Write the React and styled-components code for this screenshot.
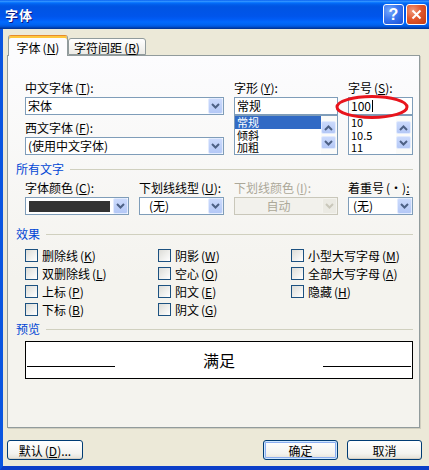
import styled, { createGlobalStyle } from "styled-components";

const GlobalStyle = createGlobalStyle`
  html, body {
    margin: 0;
    padding: 0;
    background: #fff;
  }
  body {
    font-family: "Noto Sans CJK SC", "Liberation Sans", sans-serif;
    font-size: 12px;
    color: #000;
  }
`;

const Window = styled.div`
  width: 429px;
  height: 470px;
  display: flex;
  flex-direction: column;
  overflow: hidden;
`;
const TitleBar = styled.div`
  height: 29px;
  flex-shrink: 0;
  box-sizing: border-box;
  display: flex;
  align-items: center;
  justify-content: space-between;
  padding: 0 2px 0 5px;
  background: linear-gradient(
    to bottom,
    #0058ee 0%,
    #3593ff 4%,
    #288eff 6%,
    #127dff 8%,
    #036ffc 10%,
    #0262ee 14%,
    #0057e5 20%,
    #0054e3 24%,
    #0055eb 56%,
    #005bf5 66%,
    #026afe 76%,
    #0062ef 86%,
    #0052d6 92%,
    #0040ab 96%,
    #003092 100%
  );
`;
const TitleText = styled.span`
  color: #fff;
  font-weight: bold;
  font-size: 13px;
  letter-spacing: 1px;
  text-shadow: 1px 1px 0 #0a1883;
`;
const CaptionButtons = styled.div`
  display: flex;
  gap: 2px;
`;
const CaptionButton = styled.div`
  width: 21px;
  height: 21px;
  box-sizing: border-box;
  border: 1px solid #fff;
  border-radius: 3px;
  display: flex;
  align-items: center;
  justify-content: center;
  color: #fff;
  font-family: "Liberation Sans", sans-serif;
  font-weight: bold;
  font-size: 16px;
  background: ${(props) =>
    props.$variant === "close"
      ? "radial-gradient(circle at 30% 30%, #f09a7c 0%, #e2572d 45%, #c13b12 100%)"
      : "radial-gradient(circle at 30% 30%, #78a8fb 0%, #3b77f0 45%, #1a4fd6 100%)"};
`;

const Frame = styled.div`
  flex: 1;
  display: flex;
  flex-direction: column;
  background: #ece9d8;
  border-left: 3px solid #0a55e0;
  border-bottom: 4px solid #0c3ec8;
  padding: 6px 7px 0 4px;
`;
const Tabs = styled.div`
  height: 20px;
  display: flex;
  align-items: flex-end;
  padding-left: 1px;
  position: relative;
  z-index: 1;
`;
const Tab = styled.div`
  box-sizing: border-box;
  width: ${(props) => props.$w}px;
  height: ${(props) => (props.$active ? 21 : 17)}px;
  margin-bottom: ${(props) => (props.$active ? -1 : 0)}px;
  border: 1px solid #919b9c;
  border-bottom: ${(props) => (props.$active ? "none" : "1px solid #919b9c")};
  border-top-color: ${(props) => (props.$active ? "#e68b2c" : "#919b9c")};
  border-radius: 3px 3px 0 0;
  box-shadow: ${(props) => (props.$active ? "inset 0 2px 0 #ffc73c" : "none")};
  background: ${(props) => (props.$active ? "#fcfcfe" : "linear-gradient(#ffffff, #ecebe6)")};
  display: flex;
  align-items: center;
  justify-content: center;
  padding-top: 2px;
  white-space: nowrap;
`;
const Panel = styled.div`
  width: 413px;
  height: 373px;
  box-sizing: border-box;
  border: 1px solid #919b9c;
  box-shadow: 1px 1px 0 #d0cebf;
  background: linear-gradient(#fcfcfe, #f4f3ee 60%);
  padding: 25px 6px 0 17px;
  display: flex;
  flex-direction: column;
`;

const FieldGrid = styled.div`
  display: grid;
  grid-template-columns: 104px 85px 104px 65px;
  column-gap: 10px;
  margin-top: ${(props) => props.$mt || 0}px;
`;
const Column = styled.div`
  display: flex;
  flex-direction: column;
  gap: ${(props) => props.$gap || 0}px;
  grid-column: ${(props) => props.$span || "auto"};
`;
const Field = styled.div`
  display: flex;
  flex-direction: column;
  gap: 2px;
`;
const Label = styled.div`
  height: 14px;
  line-height: 14px;
  white-space: nowrap;
  color: ${(props) => (props.$disabled ? "#aca899" : "#000")};
`;
const Combo = styled.div`
  height: 18px;
  box-sizing: border-box;
  border: 1px solid ${(props) => (props.$disabled ? "#c9c7ba" : "#7f9db9")};
  background: ${(props) => (props.$disabled ? "#f2f1ec" : "#fff")};
  color: ${(props) => (props.$disabled ? "#aca899" : "#000")};
  display: flex;
  align-items: center;
`;
const ComboText = styled.div`
  flex: 1;
  line-height: 16px;
  padding-left: ${(props) => props.$indent ?? 2}px;
  text-align: ${(props) => (props.$center ? "center" : "left")};
  white-space: nowrap;
`;
const ColorSwatch = styled.div`
  flex: 1;
  height: 11px;
  margin: 0 3px 0 3px;
  background: #333333;
`;
const DropButton = styled.div`
  width: 15px;
  height: 16px;
  box-sizing: border-box;
  border: 1px solid ${(props) => (props.$disabled ? "#f4f3ee" : "#e2ebfe")};
  border-radius: 2px;
  background: ${(props) =>
    props.$disabled ? "#ebeae3" : "linear-gradient(#cbdafc, #b4c8f6)"};
  display: flex;
  align-items: center;
  justify-content: center;
`;
const TextBox = styled.div`
  position: relative;
  height: 18px;
  box-sizing: border-box;
  border: 1px solid #7f9db9;
  background: #fff;
  line-height: 16px;
  padding-left: 2px;
  display: flex;
  align-items: center;
`;
const Caret = styled.span`
  width: 1px;
  height: 12px;
  background: #000;
  margin-left: 1px;
`;
const Ellipse = styled.svg`
  position: absolute;
  left: -16px;
  top: -5px;
  overflow: visible;
  z-index: 2;
`;
const ListBox = styled.div`
  height: 40px;
  box-sizing: border-box;
  border: 1px solid #7f9db9;
  background: #fff;
  display: flex;
`;
const ListItems = styled.div`
  flex: 1;
`;
const ListItem = styled.div`
  height: 12.6px;
  line-height: 12.6px;
  font-size: 11px;
  padding-left: 2px;
  background: ${(props) => (props.$selected ? "#316ac5" : "transparent")};
  color: ${(props) => (props.$selected ? "#fff" : "#000")};
  white-space: nowrap;
`;
const ScrollColumn = styled.div`
  width: 16px;
  display: flex;
  flex-direction: column;
  justify-content: center;
  align-items: flex-start;
  gap: 2px;
  background: #fbfbf9;
`;
const ScrollButton = styled.div`
  width: 15px;
  height: 13px;
  box-sizing: border-box;
  border: 1px solid #e2ebfe;
  border-radius: 2px;
  background: linear-gradient(#cbdafc, #b4c8f6);
  display: flex;
  align-items: center;
  justify-content: center;
`;

const SectionHead = styled.div`
  height: 14px;
  margin: ${(props) => props.$mt}px 0 0 -9px;
  display: flex;
  align-items: center;
  gap: 6px;
  color: #0046d5;
  line-height: 14px;
  &::after {
    content: "";
    flex: 1;
    height: 1px;
    background: #d0d0bf;
  }
`;

const Effects = styled.div`
  margin-top: 5px;
  display: grid;
  grid-template-columns: 133px 133px 1fr;
  grid-template-rows: repeat(4, 18px);
  grid-auto-flow: column;
`;
const CheckRow = styled.div`
  display: flex;
  align-items: center;
  gap: 4px;
  white-space: nowrap;
`;
const CheckBox = styled.span`
  width: 13px;
  height: 13px;
  box-sizing: border-box;
  border: 1px solid #1c5180;
  background: linear-gradient(135deg, #dcdcd7, #ffffff);
`;

const Preview = styled.div`
  margin-top: 5px;
  height: 38px;
  box-sizing: border-box;
  border: 1px solid #000;
  background: #fff;
  display: grid;
  grid-template-columns: 88px 1fr 88px;
  align-items: center;
  padding: 0 1px;
`;
const PreviewLine = styled.div`
  height: 1px;
  background: #000;
  margin-top: 13px;
`;
const PreviewText = styled.div`
  text-align: center;
  font-size: 16px;
  line-height: 18px;
`;

const Footer = styled.div`
  margin-top: 12px;
  display: flex;
  justify-content: space-between;
`;
const ButtonGroup = styled.div`
  display: flex;
  gap: 9px;
`;
const Button = styled.div`
  width: ${(props) => props.$w}px;
  height: 20px;
  box-sizing: border-box;
  border: 1px solid #003c74;
  border-radius: 3px;
  background: linear-gradient(#ffffff, #f3f3ef 70%, #e3e0d6);
  box-shadow: ${(props) =>
    props.$default ? "inset 0 0 0 1px #cee7ff, inset 0 0 0 2px #8caef0" : "inset 0 -1px 0 #d6d0c5"};
  display: flex;
  align-items: center;
  justify-content: center;
  white-space: nowrap;
`;
const Mnemonic = styled.span`
  margin-left: 2px;
`;

const Chevron = ({ up, disabled }) => (
  <svg width="9" height="6" viewBox="0 0 9 6">
    <path
      d={up ? "M1 5 L4.5 1.5 L8 5" : "M1 1 L4.5 4.5 L8 1"}
      stroke={disabled ? "#c9c7ba" : "#4d6185"}
      strokeWidth="2"
      fill="none"
    />
  </svg>
);

const Mn = ({ t, k, tail = "" }) => (
  <>
    {t}
    <Mnemonic>
      (<u>{k}</u>){tail}
    </Mnemonic>
  </>
);

const Select = ({ children, disabled, indent, center }) => (
  <Combo $disabled={disabled}>
    <ComboText $indent={indent} $center={center}>
      {children}
    </ComboText>
    <DropButton $disabled={disabled}>
      <Chevron disabled={disabled} />
    </DropButton>
  </Combo>
);

const List = ({ items, selected }) => (
  <ListBox>
    <ListItems>
      {items.map((item) => (
        <ListItem key={item} $selected={item === selected}>
          {item}
        </ListItem>
      ))}
    </ListItems>
    <ScrollColumn>
      <ScrollButton>
        <Chevron up />
      </ScrollButton>
      <ScrollButton>
        <Chevron />
      </ScrollButton>
    </ScrollColumn>
  </ListBox>
);

const effects = [
  ["删除线", "K"],
  ["双删除线", "L"],
  ["上标", "P"],
  ["下标", "B"],
  ["阴影", "W"],
  ["空心", "O"],
  ["阳文", "E"],
  ["阴文", "G"],
  ["小型大写字母", "M"],
  ["全部大写字母", "A"],
  ["隐藏", "H"],
];

const App = () => {
  return (
    <>
      <GlobalStyle />
      <Window>
        <TitleBar>
          <TitleText>字体</TitleText>
          <CaptionButtons>
            <CaptionButton>?</CaptionButton>
            <CaptionButton $variant="close">
              <svg width="11" height="11" viewBox="0 0 11 11">
                <path d="M1.5 1.5 L9.5 9.5 M9.5 1.5 L1.5 9.5" stroke="#fff" strokeWidth="2" />
              </svg>
            </CaptionButton>
          </CaptionButtons>
        </TitleBar>
        <Frame>
          <Tabs>
            <Tab $active $w={60}>
              <Mn t="字体" k="N" />
            </Tab>
            <Tab $w={78}>
              <Mn t="字符间距" k="R" />
            </Tab>
          </Tabs>
          <Panel>
            <FieldGrid>
              <Column $span="1 / 3" $gap={6}>
                <Field>
                  <Label>
                    <Mn t="中文字体" k="T" tail=":" />
                  </Label>
                  <Select>宋体</Select>
                </Field>
                <Field>
                  <Label>
                    <Mn t="西文字体" k="F" tail=":" />
                  </Label>
                  <Select>(使用中文字体)</Select>
                </Field>
              </Column>
              <Column>
                <Field>
                  <Label>
                    <Mn t="字形" k="Y" tail=":" />
                  </Label>
                  <Column>
                    <TextBox>常规</TextBox>
                    <List items={["常规", "倾斜", "加粗"]} selected="常规" />
                  </Column>
                </Field>
              </Column>
              <Column>
                <Field>
                  <Label>
                    <Mn t="字号" k="S" tail=":" />
                  </Label>
                  <Column>
                    <TextBox>
                      100
                      <Caret />
                      <Ellipse width="76" height="26" viewBox="0 0 76 26">
                        <ellipse cx="39" cy="14" rx="35" ry="10.5" stroke="#e8141c" strokeWidth="3" fill="none" />
                      </Ellipse>
                    </TextBox>
                    <List items={["10", "10.5", "11"]} />
                  </Column>
                </Field>
              </Column>
            </FieldGrid>

            <SectionHead $mt={7}>所有文字</SectionHead>
            <FieldGrid $mt={5}>
              <Field>
                <Label>
                  <Mn t="字体颜色" k="C" tail=":" />
                </Label>
                <Combo>
                  <ColorSwatch />
                  <DropButton>
                    <Chevron />
                  </DropButton>
                </Combo>
              </Field>
              <Field>
                <Label>
                  <Mn t="下划线线型" k="U" tail=":" />
                </Label>
                <Select indent={9}>(无)</Select>
              </Field>
              <Field>
                <Label $disabled>
                  <Mn t="下划线颜色" k="I" tail=":" />
                </Label>
                <Select disabled center indent={0}>
                  自动
                </Select>
              </Field>
              <Field>
                <Label>
                  着重号<Mnemonic>(•)<u>:</u></Mnemonic>
                </Label>
                <Select indent={4}>(无)</Select>
              </Field>
            </FieldGrid>

            <SectionHead $mt={12}>效果</SectionHead>
            <Effects>
              {effects.map(([t, k]) => (
                <CheckRow key={k}>
                  <CheckBox />
                  <span>
                    <Mn t={t} k={k} />
                  </span>
                </CheckRow>
              ))}
            </Effects>

            <SectionHead $mt={4}>预览</SectionHead>
            <Preview>
              <PreviewLine />
              <PreviewText>满足</PreviewText>
              <PreviewLine />
            </Preview>
          </Panel>
          <Footer>
            <Button $w={76}>
              <Mn t="默认" k="D" tail="..." />
            </Button>
            <ButtonGroup>
              <Button $w={75} $default>
                确定
              </Button>
              <Button $w={75}>取消</Button>
            </ButtonGroup>
          </Footer>
        </Frame>
      </Window>
    </>
  );
};

export default App;
